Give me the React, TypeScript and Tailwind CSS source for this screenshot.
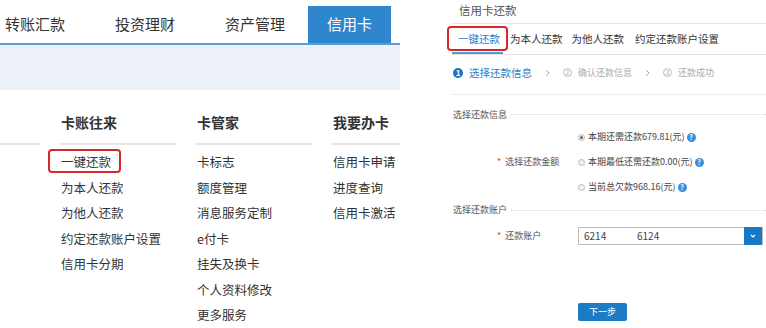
import React from 'react';

const NAV = ['转账汇款', '投资理财', '资产管理'];

const COLUMNS = [
	{
		title: '卡账往来',
		width: 'w-[118px]',
		items: ['一键还款', '为本人还款', '为他人还款', '约定还款账户设置', '信用卡分期'],
	},
	{
		title: '卡管家',
		width: 'w-[118px]',
		items: ['卡标志', '额度管理', '消息服务定制', 'e付卡', '挂失及换卡', '个人资料修改', '更多服务'],
	},
	{
		title: '我要办卡',
		width: 'w-[90px]',
		items: ['信用卡申请', '进度查询', '信用卡激活'],
	},
];

const AMOUNTS = [
	{ label: '本期还需还款679.81(元)', checked: true },
	{ label: '本期最低还需还款0.00(元)', checked: false },
	{ label: '当前总欠款968.16(元)', checked: false },
];

const HelpIcon = () => (
	<span className="ml-[2px] flex h-[9px] w-[9px] items-center justify-center rounded-full bg-[#3b8fdc] text-[7px] font-bold leading-none text-white">
		?
	</span>
);

const Chevron = () => (
	<svg width="5" height="8" viewBox="0 0 5 8" className="mx-[13px]">
		<path d="M1 1l3 3-3 3" fill="none" stroke="#aaa" strokeWidth="1" />
	</svg>
);

const SectionLabel = ({ text, className = '' }: { text: string; className?: string }) => (
	<div className={`flex items-center ${className}`}>
		<span className="pl-px text-[9px] text-[#555]">{text}</span>
		<div className="ml-[4px] flex-1 border-t border-dotted border-[#d4d4d4]" />
	</div>
);

const LeftPanel = () => (
	<div className="w-[400px] shrink-0 overflow-hidden">
		<div className="flex h-[43px] items-end">
			{NAV.map((n, i) => (
				<div
					key={n}
					className={`flex h-[37px] items-center pl-[5px] text-[15px] text-[#333] ${i === 2 ? 'w-[88px]' : 'w-[110px]'}`}
				>
					{n}
				</div>
			))}
			<div className="flex h-[37px] w-[83px] items-center justify-center bg-[#2f86cd] text-[15px] text-white">
				信用卡
			</div>
		</div>
		<div className="h-[2px] bg-[#5a9ad6]" />
		<div className="h-[45px] bg-[#edf2f8]" />
		<div className="flex gap-[18px] pt-[22px]">
			<div className="w-[41px] shrink-0">
				<div className="h-[20px]" />
				<div className="mt-[11px] h-[2px] bg-[#e6e6e6]" />
			</div>
			{COLUMNS.map((col) => (
				<div key={col.title} className={`${col.width} shrink-0`}>
					<div className="h-[20px] pl-[2px] text-[14px] font-bold leading-[20px] text-[#333]">
						{col.title}
					</div>
					<div className="mt-[11px] h-[2px] bg-[#e6e6e6]" />
					<div className="mt-[4px]">
						{col.items.map((it, i) => (
							<div key={it} className="h-[25.5px] pl-[2px] text-[12.5px] leading-[25.5px] text-[#333]">
								<span className="relative whitespace-nowrap">
									{it}
									{col.title === '卡账往来' && i === 0 && (
										<span className="absolute -left-[13px] -top-[3px] h-[24px] w-[73px] rounded-[4px] border-2 border-[#d8262b]" />
									)}
								</span>
							</div>
						))}
					</div>
				</div>
			))}
		</div>
	</div>
);

const RightPanel = () => (
	<div className="ml-[52px] flex-1">
		<div className="h-[24px] border-b border-[#e6e6e6] pl-[7px] text-[11.5px] leading-[20px] text-[#555]">
			信用卡还款
		</div>
		<div className="flex h-[31px] items-center gap-[7px] border-b border-[#e3e3e3] pl-[6px] text-[10.5px] text-[#333]">
			<span className="relative text-[#2a7fc9]">
				一键还款
				<span className="absolute -left-[11px] -top-[5px] h-[25px] w-[61px] rounded-[4px] border-2 border-[#d8262b]" />
				<span className="absolute -left-[6px] top-[21px] h-[2px] w-[51px] bg-[#4f9ad8]" />
			</span>
			<span className="ml-[3px]">为本人还款</span>
			<span className="ml-[2px]">为他人还款</span>
			<span className="ml-[4px]">约定还款账户设置</span>
		</div>
		<div className="flex h-[40px] items-center border-b border-[#ececec] pb-[4px] pl-px text-[9px] text-[#aaa]">
			<span className="flex h-[10px] w-[10px] items-center justify-center rounded-full bg-[#1f74c2] text-[8px] font-bold leading-none text-white">
				1
			</span>
			<span className="ml-[6px] text-[10.5px] text-[#2a7fc9]">选择还款信息</span>
			<Chevron />
			<span className="flex h-[9px] w-[9px] items-center justify-center rounded-full border border-[#bbb] text-[7px] leading-none">
				2
			</span>
			<span className="ml-[6px]">确认还款信息</span>
			<Chevron />
			<span className="flex h-[9px] w-[9px] items-center justify-center rounded-full border border-[#bbb] text-[7px] leading-none">
				3
			</span>
			<span className="ml-[6px]">还款成功</span>
		</div>
		<SectionLabel text="选择还款信息" className="mt-[10px] h-[19.5px]" />
		<div className="flex">
			<div className="flex w-[126px] shrink-0 items-center pl-[45px] text-[9px] text-[#555]">
				<span className="mr-[4px] text-[#e23b3b]">*</span>
				选择还款金额
			</div>
			<div>
				{AMOUNTS.map((a) => (
					<div key={a.label} className="flex h-[25px] items-center text-[9px] text-[#444]">
						<span className="flex h-[7px] w-[7px] items-center justify-center rounded-full border border-[#bbb] bg-[#f2f2f2]">
							{a.checked && <span className="h-[3px] w-[3px] rounded-full bg-[#666]" />}
						</span>
						<span className="ml-[3px]">{a.label}</span>
						<HelpIcon />
					</div>
				))}
			</div>
		</div>
		<SectionLabel text="选择还款账户" className="h-[21px]" />
		<div className="mt-[6px] flex h-[18px] items-center">
			<div className="w-[126px] shrink-0 pl-[45px] text-[9px] text-[#555]">
				<span className="mr-[4px] text-[#e23b3b]">*</span>
				还款账户
			</div>
			<div className="flex h-[18px] w-[185px] items-center border border-[#bcbcbc] text-[10px] text-[#444]">
				<span className="w-[58px] pl-[5px]">6214</span>
				<span className="flex-1">6124</span>
				<span className="flex h-[18px] w-[18px] items-center justify-center bg-[#1a79c5]">
					<svg width="6" height="4" viewBox="0 0 6 4">
						<path d="M1 1l2 2 2-2" fill="none" stroke="#fff" strokeWidth="1.2" />
					</svg>
				</span>
			</div>
		</div>
		<div className="ml-[126px] mt-[58px] flex h-[18px] w-[49px] items-center justify-center rounded-[2px] bg-[#1b7bc5] text-[9px] text-white">
			下一步
		</div>
	</div>
);

const App = () => (
	<div className="flex h-[328px] w-[766px] overflow-hidden bg-white font-['Noto_Sans_CJK_SC','Noto_Sans',sans-serif]">
		<LeftPanel />
		<RightPanel />
	</div>
);

export default App;
